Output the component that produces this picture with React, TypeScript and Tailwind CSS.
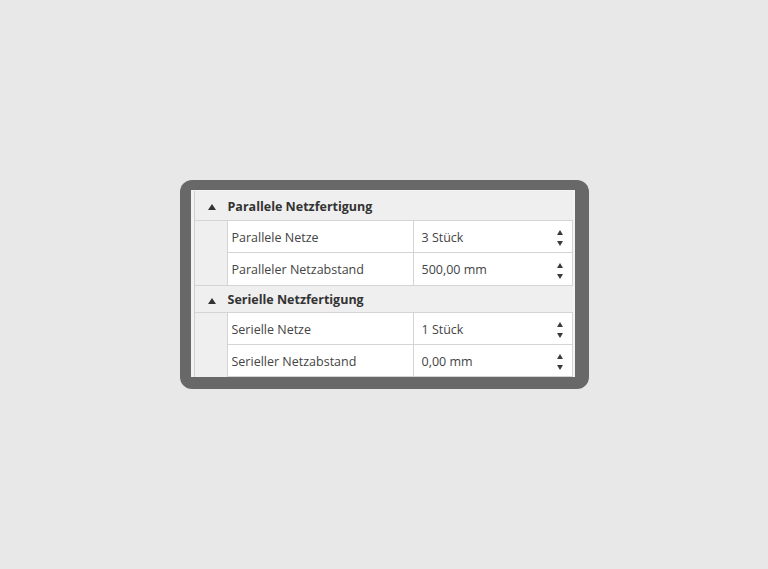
const font = { fontFamily: '"Segoe UI", "Open Sans", "Noto Sans", sans-serif' };

const Up = () => (
  <svg width={6} height={5} viewBox="0 0 6 5" className="block">
    <path d="M3 0 L6 5 L0 5 Z" fill="#3a3a3a" />
  </svg>
);

const Down = () => (
  <svg width={6} height={5} viewBox="0 0 6 5" className="block">
    <path d="M0 0 L6 0 L3 5 Z" fill="#3a3a3a" />
  </svg>
);

type Prop = { name: string; value: string };

const Category = ({ title, h, top }: { title: string; h: string; top?: boolean }) => (
  <div
    className={`flex items-center pt-[3px] border-b border-[#d4d4d4] bg-[#efefef] ${h} ${
      top ? "border-t" : ""
    }`}
  >
    <div className="w-[33px] flex justify-center pl-[2px]">
      <svg width={8} height={6} viewBox="0 0 8 6" className="block">
        <path d="M4 0 L8 6 L0 6 Z" fill="#333" />
      </svg>
    </div>
    <span className="text-[12.5px] font-bold text-[#333]">{title}</span>
  </div>
);

const Row = ({ name, value, last }: Prop & { last?: boolean }) => (
  <div className="flex h-[32px] shrink-0">
    <div className="w-[33px] border-r border-[#d4d4d4] bg-[#efefef]" />
    <div
      className={`w-[186px] border-r border-[#d4d4d4] bg-white flex items-center pt-[3px] pl-[4px] text-[12.5px] text-[#444] ${
        last ? "" : "border-b"
      }`}
    >
      {name}
    </div>
    <div
      className={`w-[159px] border-r border-[#d4d4d4] bg-white flex items-center pt-[3px] pl-[8px] pr-[9px] text-[12.5px] text-[#444] ${
        last ? "" : "border-b"
      }`}
    >
      <span className="flex-1">{value}</span>
      <div className="flex flex-col gap-[6px]">
        <Up />
        <Down />
      </div>
    </div>
  </div>
);

export default function App() {
  return (
    <div className="h-[569px] w-full bg-[#e8e8e8] flex items-center justify-center" style={font}>
      <div className="w-[409px] h-[209px] rounded-[12px] bg-[#686868] pl-[11px] pt-[10px] pr-[14px] pb-[12px]">
        <div className="h-full w-full bg-[#f3f3f3] pl-[3px] pr-[2px] pt-[1px] overflow-hidden">
          <div className="border-l border-[#cfcfcf] flex flex-col">
            <Category title="Parallele Netzfertigung" h="h-[30px]" />
            <Row name="Parallele Netze" value="3 Stück" />
            <Row name="Paralleler Netzabstand" value="500,00 mm" last />
            <Category title="Serielle Netzfertigung" h="h-[28px]" top />
            <Row name="Serielle Netze" value="1 Stück" />
            <Row name="Serieller Netzabstand" value="0,00 mm" />
          </div>
        </div>
      </div>
    </div>
  );
}
